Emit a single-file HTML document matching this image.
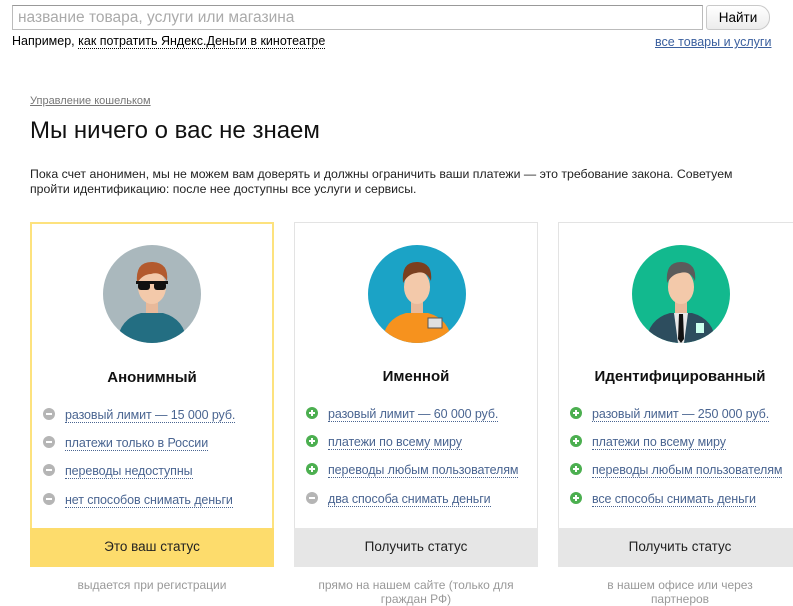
<!DOCTYPE html>
<html><head><meta charset="utf-8"><style>
*{margin:0;padding:0;box-sizing:border-box}
body{width:793px;height:604px;overflow:hidden;background:#fff;font-family:"Liberation Sans",Arial,sans-serif;color:#000;position:relative}
.a{position:absolute;white-space:nowrap}
.card{position:absolute;top:222px;width:244px;height:345px;border:1px solid #e3e3e3;background:#fff}
.card.y{border:2px solid #fde27e}
.ttl{position:absolute;top:145px;left:0;right:0;text-align:center;font-weight:bold;font-size:15px;color:#111}
.li{position:absolute;left:11px;font-size:12.5px;color:#4a6591;letter-spacing:-0.1px}
.li span{border-bottom:1px dotted #4a6591}
.ic{display:inline-block;width:12px;height:12px;border-radius:50%;background:#b5b5b5;vertical-align:-1px;margin-right:10px;position:relative}
.ic::before{content:"";position:absolute;left:3px;top:5px;width:6px;height:2px;background:#fff}
.ic.p{background:#4caf50}
.ic.p::after{content:"";position:absolute;left:5px;top:3px;width:2px;height:6px;background:#fff}
.btn{position:absolute;left:-1px;right:-1px;bottom:-1px;height:39px;background:#e6e6e6;text-align:center;line-height:38px;font-size:13.5px;color:#222}
.y .btn{background:#fddc6c;left:-2px;right:-2px;bottom:-2px}
.note{position:absolute;top:578px;width:244px;text-align:center;font-size:12px;color:#999;line-height:14px}
</style></head><body>
<div class="a" style="left:12px;top:5px;width:691px;height:25px;border:1px solid #bbb;border-top-color:#999;font-size:15.5px;color:#aaa;padding:3px 0 0 5px">название товара, услуги или магазина</div>
<div class="a" style="left:706px;top:5px;width:64px;height:25px;border:1px solid #c9c9c9;border-radius:3px 12px 12px 3px;background:linear-gradient(#fff,#ececec);font-size:13.5px;text-align:center;line-height:23px">Найти</div>
<div class="a" style="left:12px;top:34px;font-size:12.5px">Например, <span style="border-bottom:1px dotted #000">как потратить Яндекс.Деньги в кинотеатре</span></div>
<div class="a" style="left:655px;top:35px;font-size:12.5px;color:#3a5f9e;text-decoration:underline">все товары и услуги</div>
<div class="a" style="left:30px;top:95px;font-size:11px;color:#777;text-decoration:underline">Управление кошельком</div>
<div class="a" style="left:30px;top:117px;font-size:24px;color:#111">Мы ничего о вас не знаем</div>
<div class="a" style="left:30px;top:167px;font-size:12.3px;line-height:15px;color:#222;white-space:normal;width:740px">Пока счет анонимен, мы не можем вам доверять и должны ограничить ваши платежи — это требование закона. Советуем<br>пройти идентификацию: после нее доступны все услуги и сервисы.</div>

<div class="card y" style="left:30px">
<svg style="position:absolute;left:71px;top:21px" width="98" height="98" viewBox="0 0 98 98">
<defs><clipPath id="c1"><circle cx="49" cy="49" r="49"/></clipPath></defs>
<g clip-path="url(#c1)"><rect width="98" height="98" fill="#aab8bd"/>
<path d="M14 98 Q16 74 38 68 L60 68 Q82 74 84 98Z" fill="#236e82"/>
<rect x="43" y="54" width="12" height="14" fill="#e8b99a"/>
<ellipse cx="49" cy="42" rx="14" ry="17" fill="#f3c9aa"/>
<path d="M34 38 Q32 16 50 17 Q66 18 64 36 Q58 26 48 29 Q40 29 34 38Z" fill="#b35a2e"/>
<rect x="33" y="36" width="32" height="3" fill="#111"/><rect x="35" y="37" width="12" height="8" rx="3" fill="#111"/><rect x="51" y="37" width="12" height="8" rx="3" fill="#111"/></g></svg>
<div class="ttl">Анонимный</div>
<div class="li" style="top:184px"><i class="ic"></i><span>разовый лимит — 15 000 руб.</span></div>
<div class="li" style="top:212px"><i class="ic"></i><span>платежи только в России</span></div>
<div class="li" style="top:240px"><i class="ic"></i><span>переводы недоступны</span></div>
<div class="li" style="top:269px"><i class="ic"></i><span>нет способов снимать деньги</span></div>
<div class="btn">Это ваш статус</div>
</div>

<div class="card" style="left:294px">
<svg style="position:absolute;left:73px;top:22px" width="98" height="98" viewBox="0 0 98 98">
<defs><clipPath id="c2"><circle cx="49" cy="49" r="49"/></clipPath></defs>
<g clip-path="url(#c2)"><rect width="98" height="98" fill="#1ba3c6"/>
<path d="M14 98 Q16 74 38 68 L60 68 Q82 74 84 98Z" fill="#f6921e"/>
<rect x="60" y="73" width="14" height="10" fill="#e0e0e0" stroke="#555"/>
<rect x="43" y="54" width="12" height="14" fill="#e8b99a"/>
<ellipse cx="49" cy="42" rx="13" ry="17" fill="#f3c9aa"/>
<path d="M35 38 Q33 16 50 17 Q65 18 63 36 Q58 25 48 28 Q40 29 35 38Z" fill="#7b3f1f"/></g></svg>
<div class="ttl">Именной</div>
<div class="li" style="top:184px"><i class="ic p"></i><span>разовый лимит — 60 000 руб.</span></div>
<div class="li" style="top:212px"><i class="ic p"></i><span>платежи по всему миру</span></div>
<div class="li" style="top:240px"><i class="ic p"></i><span>переводы любым пользователям</span></div>
<div class="li" style="top:269px"><i class="ic"></i><span>два способа снимать деньги</span></div>
<div class="btn">Получить статус</div>
</div>

<div class="card" style="left:558px">
<svg style="position:absolute;left:73px;top:22px" width="98" height="98" viewBox="0 0 98 98">
<defs><clipPath id="c3"><circle cx="49" cy="49" r="49"/></clipPath></defs>
<g clip-path="url(#c3)"><rect width="98" height="98" fill="#12b98e"/>
<path d="M14 98 Q16 74 38 68 L60 68 Q82 74 84 98Z" fill="#2d4d5e"/>
<path d="M42 68 L56 68 L52 98 L46 98Z" fill="#e8e8e8"/><path d="M47 69 L51 69 L52 94 L49 98 L46 94Z" fill="#111"/>
<rect x="64" y="78" width="8" height="10" fill="#cfe"/>
<rect x="43" y="54" width="12" height="14" fill="#e8b99a"/>
<ellipse cx="49" cy="42" rx="13" ry="17" fill="#f3c9aa"/>
<path d="M35 38 Q33 16 50 17 Q65 18 63 36 Q58 25 48 28 Q40 29 35 38Z" fill="#5b5b5b"/></g></svg>
<div class="ttl">Идентифицированный</div>
<div class="li" style="top:184px"><i class="ic p"></i><span>разовый лимит — 250 000 руб.</span></div>
<div class="li" style="top:212px"><i class="ic p"></i><span>платежи по всему миру</span></div>
<div class="li" style="top:240px"><i class="ic p"></i><span>переводы любым пользователям</span></div>
<div class="li" style="top:269px"><i class="ic p"></i><span>все способы снимать деньги</span></div>
<div class="btn">Получить статус</div>
</div>

<div class="note" style="left:30px">выдается при регистрации</div>
<div class="note" style="left:294px">прямо на нашем сайте (только для граждан РФ)</div>
<div class="note" style="left:558px;padding:0 40px">в нашем офисе или через партнеров</div>
</body></html>
